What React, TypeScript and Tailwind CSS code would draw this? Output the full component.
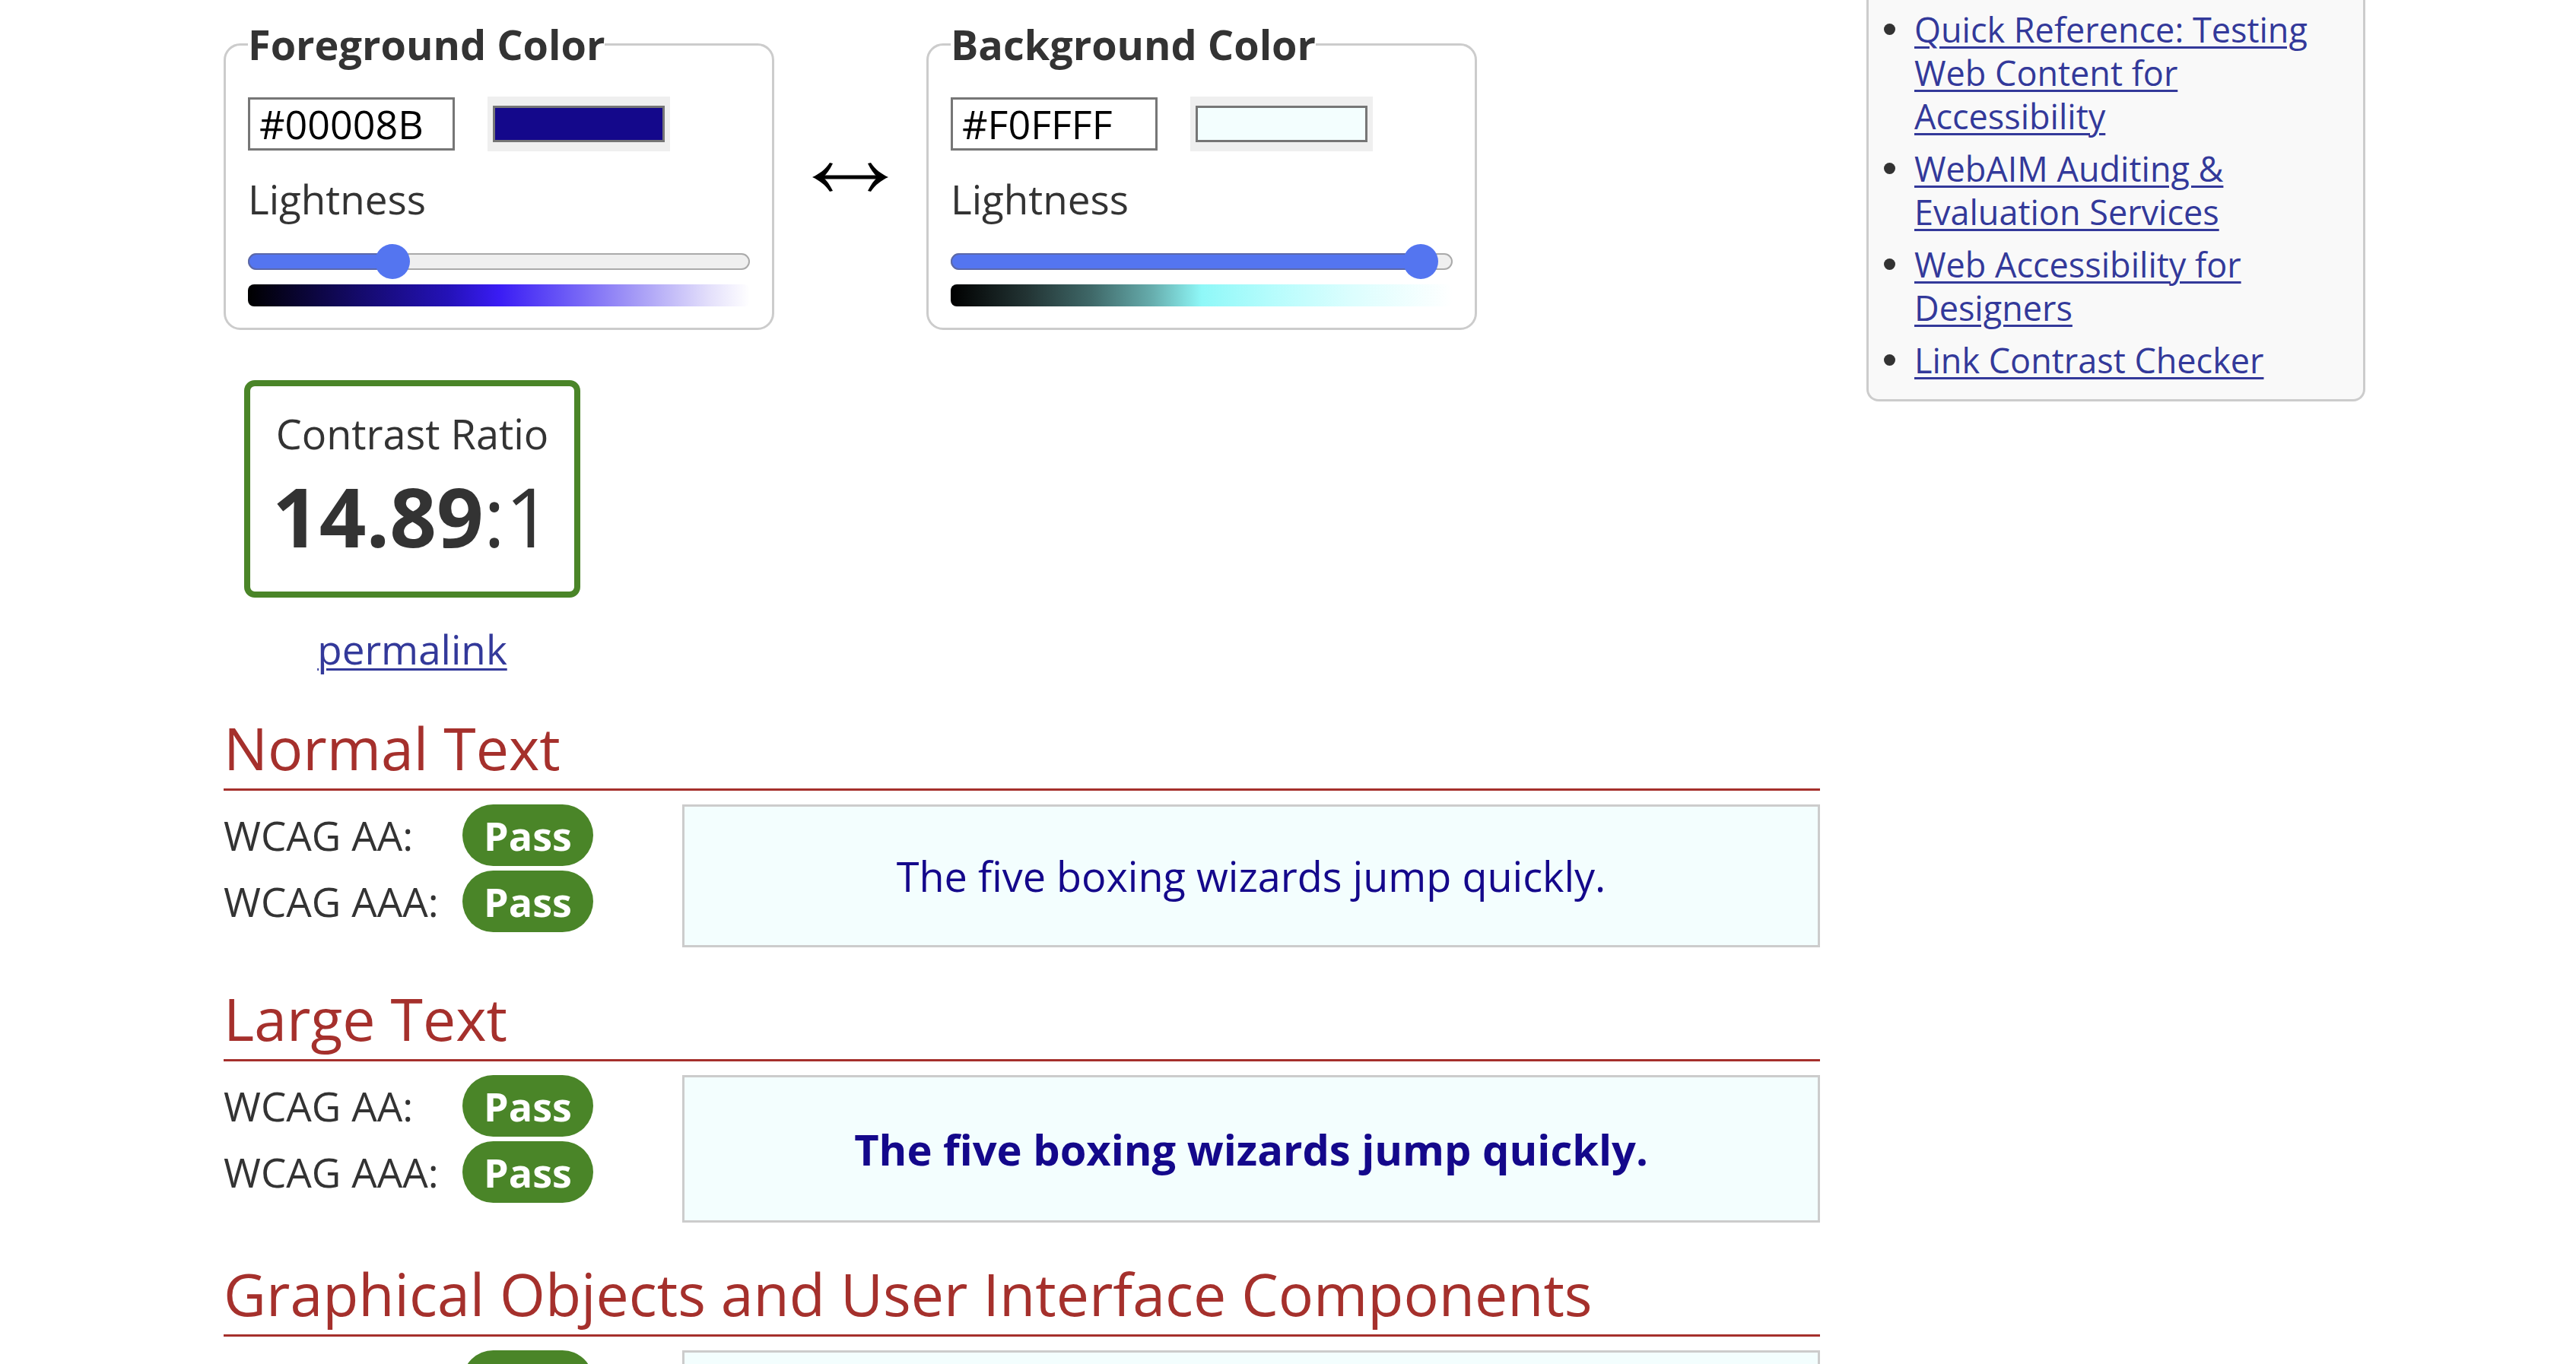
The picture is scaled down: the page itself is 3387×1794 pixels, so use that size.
import React from 'react';

type ColorPanelProps = {
  title: string;
  hex: string;
  swatch: string;
  fill: number;
  gradient: string;
};

function SwapArrow() {
  return (
    <svg width="100" height="38" viewBox="0 0 100 38" fill="black">
      <rect x="6" y="16.5" width="88" height="5" />
      <path d="M0 19 C9 15 17 9 23 0 L27 1 C23 9 19 15 14 19 C19 23 23 29 27 37 L23 38 C17 29 9 23 0 19 Z" />
      <path d="M100 19 C91 15 83 9 77 0 L73 1 C77 9 81 15 86 19 C81 23 77 29 73 37 L77 38 C83 29 91 23 100 19 Z" />
    </svg>
  );
}

function ColorPanel({ title, hex, swatch, fill, gradient }: ColorPanelProps) {
  // range thumb centre: half thumb + value * (track - thumb)
  const thumbLeft = fill * (659 - 46);
  return (
    <fieldset className="w-[724px] border-[3px] border-[#cccccc] rounded-[22px] pl-[29px] pr-[29px] pb-[28px]">
      <legend className="text-[54px] leading-[76px] font-bold text-[#333]">{title}</legend>
      <div className="flex items-center mt-[31px] gap-[43px]">
        <input
          readOnly
          value={hex}
          className="w-[272px] h-[70px] border-[3px] border-[#767676] px-[12px] text-[52px] text-black outline-none bg-white"
        />
        <div className="w-[240px] h-[72px] bg-[#efefef] px-[7px] py-[12px]">
          <div className={`w-full h-full border-[3px] border-[#767676] ${swatch}`} />
        </div>
      </div>
      <div className="mt-[23px] text-[53px] leading-[80px] text-[#333]">Lightness</div>
      <div className="relative mt-[31px] h-[22px] rounded-full border-2 border-[#aaaaaa] bg-[#efefef]">
        <div
          className="absolute left-[-2px] top-[-2px] h-[22px] rounded-full bg-[#5475f0] border-2 border-[#5b68aa]"
          style={{ width: thumbLeft + 25 }}
        />
        <div
          className="absolute top-[-14px] w-[46px] h-[46px] rounded-full bg-[#5475f0]"
          style={{ left: thumbLeft - 2 }}
        />
      </div>
      <div className={`mt-[19px] h-[29px] rounded-[8px] ${gradient}`} />
    </fieldset>
  );
}

function Badge({ text = true }: { text?: boolean }) {
  return (
    <span className="w-[172px] h-[81px] rounded-full bg-[#4a8528] text-white font-bold text-[52px] leading-none flex items-center justify-center">
      {text ? 'Pass' : null}
    </span>
  );
}

function ResultRow({ label }: { label?: string }) {
  return (
    <div className="flex items-center h-[81px]">
      <span className="w-[314px] text-[53px] text-[#333]">{label}</span>
      <Badge text={!!label} />
    </div>
  );
}

function Section({ title, sample, large, cut }: { title: string; sample: string; large?: boolean; cut?: boolean }) {
  return (
    <section className="mt-[47px]">
      <h2 className="text-[77px] leading-[94px] text-[#a5302c] pb-[6px] border-b-[3px] border-[#a5302c]">{title}</h2>
      <div className="mt-[18px] flex items-start">
        <div className="flex flex-col gap-[6px]">
          {/* last section runs past the fold, only the badge tops show */}
          <ResultRow label={cut ? undefined : 'WCAG AA:'} />
          <ResultRow label={cut ? undefined : 'WCAG AAA:'} />
        </div>
        <div
          className={`ml-[117px] flex-1 border-[3px] border-[#cccccc] bg-[#f3fefe] text-[#14088b] flex items-center justify-center ${
            large ? 'h-[194px] text-[56px] font-bold' : 'h-[188px] text-[54px]'
          }`}
        >
          {sample}
        </div>
      </div>
    </section>
  );
}

const links = [
  'Quick Reference: Testing Web Content for Accessibility',
  'WebAIM Auditing & Evaluation Services',
  'Web Accessibility for Designers',
  'Link Contrast Checker',
];

export default function App() {
  return (
    <div className="h-screen bg-white font-['Open_Sans',sans-serif] text-[#333] overflow-hidden">
      <div className="flex items-start pl-[294px] gap-[61px]">
        <main className="w-[2099px] shrink-0 pt-[20px]">
          <div className="flex items-start">
            <ColorPanel
              title="Foreground Color"
              hex="#00008B"
              swatch="bg-[#14088b]"
              fill={0.273}
              gradient="bg-[linear-gradient(to_right,#000000_0%,#140a6a_22%,#2412b8_40%,#3a1cf4_50%,#6a58f6_63%,#a89ef6_78%,#e4e0fb_92%,#ffffff_100%)]"
            />
            <div className="w-[200px] flex justify-center mt-[194px]">
              <SwapArrow />
            </div>
            <ColorPanel
              title="Background Color"
              hex="#F0FFFF"
              swatch="bg-[#f3fefe]"
              fill={0.97}
              gradient="bg-[linear-gradient(to_right,#000000_0%,#223333_15%,#3f6868_28%,#66acac_40%,#8ff8f8_50%,#b3fcfc_63%,#dcfefe_80%,#ffffff_100%)]"
            />
          </div>

          <div className="w-[496px] flex flex-col items-center">
            <div className="mt-[66px] w-[442px] h-[286px] border-[8px] border-[#4a8528] rounded-[14px] flex flex-col items-center">
              <div className="mt-[26px] text-[54px] leading-[72px]">Contrast Ratio</div>
              <div className="mt-[8px] text-[108px] leading-[130px]">
                <span className="font-bold">14.89</span>:1
              </div>
            </div>
            <a
              href="#"
              className="mt-[32px] text-[53px] leading-[72px] text-[#33399a] underline decoration-[3px] underline-offset-[5px]"
            >
              permalink
            </a>
          </div>

          <Section title="Normal Text" sample="The five boxing wizards jump quickly." />
          <Section title="Large Text" sample="The five boxing wizards jump quickly." large />
          <Section title="Graphical Objects and User Interface Components" sample="" cut />
        </main>

        <aside className="w-[656px] shrink-0 bg-[#f9f9f9] border-[3px] border-t-0 border-[#cccccc] rounded-b-[16px] pt-[10px] pb-[23px] pl-[20px] pr-[20px]">
          <ul className="flex flex-col gap-[12px]">
            {links.map((l) => (
              <li key={l} className="flex items-start">
                <span className="mt-[21px] w-[15px] h-[15px] rounded-full bg-[#333] shrink-0" />
                <a
                  href="#"
                  className="ml-[25px] text-[45px] leading-[57px] text-[#33399a] underline decoration-[3px] underline-offset-[5px] pr-[10px]"
                >
                  {l}
                </a>
              </li>
            ))}
          </ul>
        </aside>
      </div>
    </div>
  );
}
